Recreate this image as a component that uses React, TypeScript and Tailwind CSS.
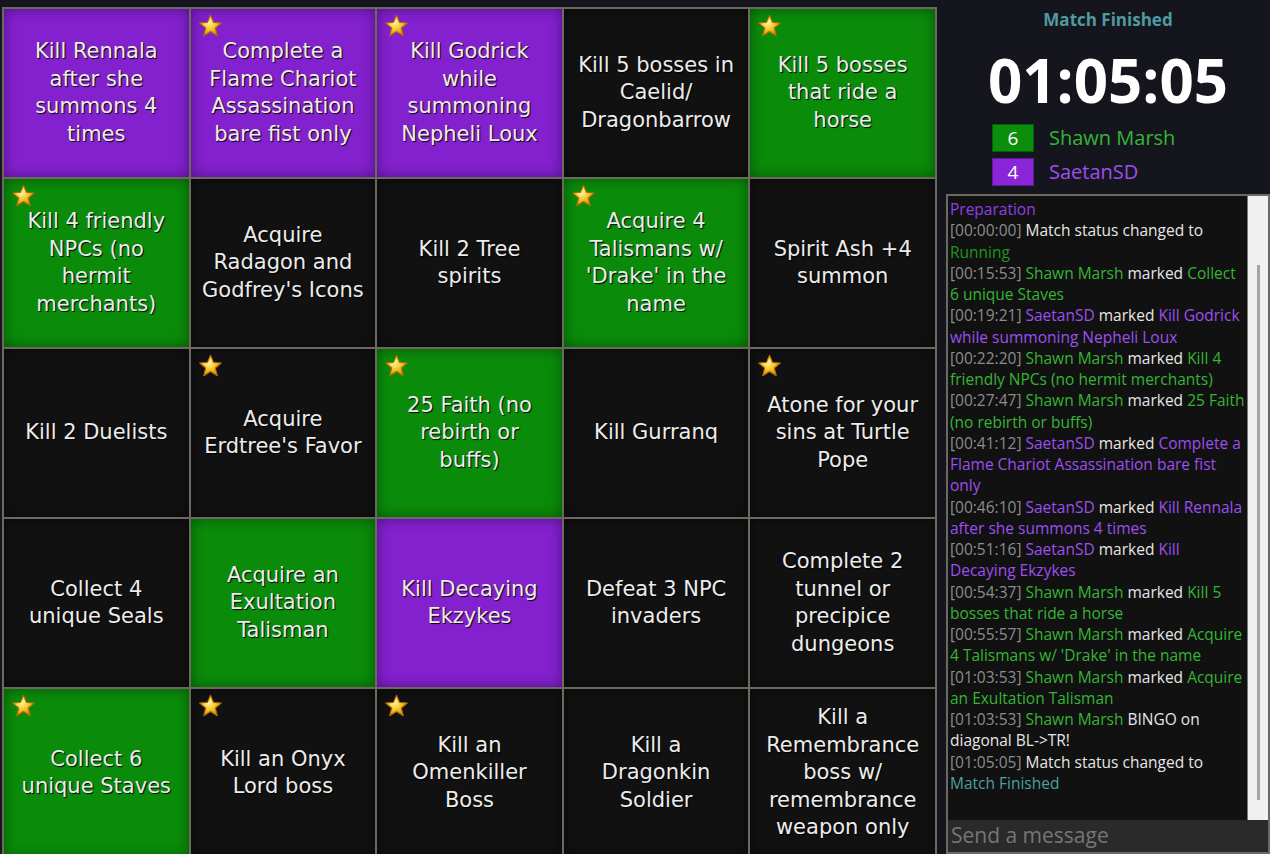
import React from "react";

type Cell = { lines: string[]; c: "p" | "g" | "b"; star?: boolean };

const cells: Cell[] = [
  { lines: ["Kill Rennala", "after she", "summons 4", "times"], c: "p" },
  { lines: ["Complete a", "Flame Chariot", "Assassination", "bare fist only"], c: "p", star: true },
  { lines: ["Kill Godrick", "while", "summoning", "Nepheli Loux"], c: "p", star: true },
  { lines: ["Kill 5 bosses in", "Caelid/", "Dragonbarrow"], c: "b" },
  { lines: ["Kill 5 bosses", "that ride a", "horse"], c: "g", star: true },
  { lines: ["Kill 4 friendly", "NPCs (no", "hermit", "merchants)"], c: "g", star: true },
  { lines: ["Acquire", "Radagon and", "Godfrey's Icons"], c: "b" },
  { lines: ["Kill 2 Tree", "spirits"], c: "b" },
  { lines: ["Acquire 4", "Talismans w/", "'Drake' in the", "name"], c: "g", star: true },
  { lines: ["Spirit Ash +4", "summon"], c: "b" },
  { lines: ["Kill 2 Duelists"], c: "b" },
  { lines: ["Acquire", "Erdtree's Favor"], c: "b", star: true },
  { lines: ["25 Faith (no", "rebirth or", "buffs)"], c: "g", star: true },
  { lines: ["Kill Gurranq"], c: "b" },
  { lines: ["Atone for your", "sins at Turtle", "Pope"], c: "b", star: true },
  { lines: ["Collect 4", "unique Seals"], c: "b" },
  { lines: ["Acquire an", "Exultation", "Talisman"], c: "g" },
  { lines: ["Kill Decaying", "Ekzykes"], c: "p" },
  { lines: ["Defeat 3 NPC", "invaders"], c: "b" },
  { lines: ["Complete 2", "tunnel or", "precipice", "dungeons"], c: "b" },
  { lines: ["Collect 6", "unique Staves"], c: "g", star: true },
  { lines: ["Kill an Onyx", "Lord boss"], c: "b", star: true },
  { lines: ["Kill an", "Omenkiller", "Boss"], c: "b", star: true },
  { lines: ["Kill a", "Dragonkin", "Soldier"], c: "b" },
  { lines: ["Kill a", "Remembrance", "boss w/", "remembrance", "weapon only"], c: "b" },
];

type Seg = [string, string];
const T = "text-[#8c8c8c]";
const W = "text-[#e6e6e6]";
const G = "text-[#35b535]";
const P = "text-[#9e4ff0]";
const chat: Seg[][] = [
  [["Preparation", "text-[#8f3fe6]"]],
  [["[00:00:00] ", T], ["Match status changed to", W]],
  [["Running", "text-[#1f961f]"]],
  [["[00:15:53] ", T], ["Shawn Marsh ", G], ["marked ", W], ["Collect", G]],
  [["6 unique Staves", G]],
  [["[00:19:21] ", T], ["SaetanSD ", P], ["marked ", W], ["Kill Godrick", P]],
  [["while summoning Nepheli Loux", P]],
  [["[00:22:20] ", T], ["Shawn Marsh ", G], ["marked ", W], ["Kill 4", G]],
  [["friendly NPCs (no hermit merchants)", G]],
  [["[00:27:47] ", T], ["Shawn Marsh ", G], ["marked ", W], ["25 Faith", G]],
  [["(no rebirth or buffs)", G]],
  [["[00:41:12] ", T], ["SaetanSD ", P], ["marked ", W], ["Complete a", P]],
  [["Flame Chariot Assassination bare fist", P]],
  [["only", P]],
  [["[00:46:10] ", T], ["SaetanSD ", P], ["marked ", W], ["Kill Rennala", P]],
  [["after she summons 4 times", P]],
  [["[00:51:16] ", T], ["SaetanSD ", P], ["marked ", W], ["Kill", P]],
  [["Decaying Ekzykes", P]],
  [["[00:54:37] ", T], ["Shawn Marsh ", G], ["marked ", W], ["Kill 5", G]],
  [["bosses that ride a horse", G]],
  [["[00:55:57] ", T], ["Shawn Marsh ", G], ["marked ", W], ["Acquire", G]],
  [["4 Talismans w/ 'Drake' in the name", G]],
  [["[01:03:53] ", T], ["Shawn Marsh ", G], ["marked ", W], ["Acquire", G]],
  [["an Exultation Talisman", G]],
  [["[01:03:53] ", T], ["Shawn Marsh ", G], ["BINGO on", W]],
  [["diagonal BL->TR!", W]],
  [["[01:05:05] ", T], ["Match status changed to", W]],
  [["Match Finished", "text-[#4e9fa3]"]],
];

function Star() {
  return (
    <svg width="25" height="24" viewBox="0 0 24 23" className="absolute left-[7px] top-[5px]">
      <defs>
        <radialGradient id="sg" cx="40%" cy="35%" r="70%">
          <stop offset="0%" stopColor="#fff6b0" />
          <stop offset="45%" stopColor="#f7cc30" />
          <stop offset="100%" stopColor="#d08a00" />
        </radialGradient>
      </defs>
      <path
        d="M12 1.2 L14.9 8.1 L22.4 8.6 L16.6 13.4 L18.5 20.8 L12 16.8 L5.5 20.8 L7.4 13.4 L1.6 8.6 L9.1 8.1 Z"
        fill="url(#sg)"
        stroke="#b86a00"
        strokeWidth="1"
        strokeLinejoin="round"
      />
    </svg>
  );
}

export default function App() {
  return (
    <div className="w-[1270px] h-[854px] overflow-hidden bg-[#15151e] flex items-start">
      <div
        className="ml-[2px] mt-[7px] w-[935px] shrink-0 bg-[#6d695f] p-[2px] grid grid-cols-5 gap-[2px]"
        style={{ gridAutoRows: "168px" }}
      >
        {cells.map((cell, i) => (
          <div
            key={i}
            className={
              "relative flex flex-col items-center justify-center text-center text-[21px] leading-[27.5px] text-[#ececec] [text-shadow:1px_1px_1px_rgba(0,0,0,0.95)] " +
              (cell.c === "p"
                ? "bg-[#8421cf] shadow-[inset_0_0_14px_rgba(40,0,70,0.55)]"
                : cell.c === "g"
                ? "bg-[#0a8c0a] shadow-[inset_0_0_14px_rgba(0,40,0,0.55)]"
                : "bg-[#111111] shadow-[inset_0_0_12px_rgba(0,0,0,0.5)]")
            }
            style={{ fontFamily: '"DejaVu Sans", sans-serif' }}
          >
            {cell.star && <Star />}
            {cell.lines.map((l, j) => (
              <div key={j} className="whitespace-nowrap">
                {l}
              </div>
            ))}
          </div>
        ))}
      </div>
      <div
        className="flex-1 h-[854px] pl-[9px] flex flex-col"
        style={{ fontFamily: '"Open Sans", sans-serif' }}
      >
        <div className="pt-[8px] h-[32px] text-center text-[17px] leading-[24px] font-bold text-[#4f9ba0]">
          Match Finished
        </div>
        <div className="mt-[18px] h-[60px] text-center text-[60px] leading-[60px] font-bold text-white">
          01:05:05
        </div>
        <div className="mt-[14px] pl-[46px] flex flex-col gap-[6px]">
          <div className="flex items-center h-[28px]">
            <div className="w-[42px] h-[28px] bg-[#0b8e0b] border border-[#075f07] flex items-center justify-center text-white text-[19px]">
              6
            </div>
            <div className="ml-[15px] text-[20px] text-[#35b535]">Shawn Marsh</div>
          </div>
          <div className="flex items-center h-[28px]">
            <div className="w-[42px] h-[28px] bg-[#8a25d8] border border-[#5f1a99] flex items-center justify-center text-white text-[19px]">
              4
            </div>
            <div className="ml-[15px] text-[20px] text-[#9e4ff0]">SaetanSD</div>
          </div>
        </div>
        <div className="mt-[8px] flex-1 border-2 border-[#6d695f] flex flex-col min-h-0">
          <div className="flex-1 flex min-h-0">
            <div className="flex-1 bg-[#111111] pt-[3px] pl-[2px] text-[15.5px] leading-[21.25px] overflow-hidden">
              {chat.map((line, i) => (
                <div key={i} className="whitespace-nowrap">
                  {line.map(([t, c], j) => (
                    <span key={j} className={c}>
                      {t}
                    </span>
                  ))}
                </div>
              ))}
            </div>
            <div className="w-[21px] border-l border-[#777] bg-[#f0f0f0] relative">
              <div className="absolute left-[9px] top-[69px] w-[3px] h-[535px] bg-[#a4a4a4]" />
            </div>
          </div>
          <div className="h-[32px] bg-[#2a2a2a] pl-[3px] flex items-center text-[21px] text-[#767676]">
            Send a message
          </div>
        </div>
      </div>
    </div>
  );
}
